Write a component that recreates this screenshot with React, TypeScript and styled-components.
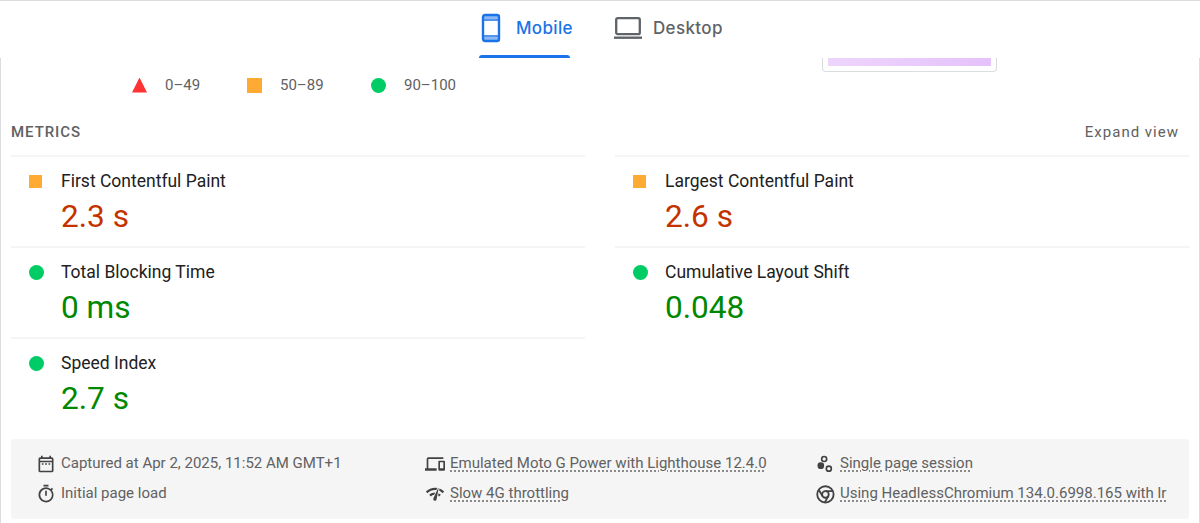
import React from 'react';
import styled, { createGlobalStyle } from 'styled-components';

const GlobalStyle = createGlobalStyle`
  * {
    box-sizing: border-box;
  }

  body {
    margin: 0;
    background: #fff;
    font-family: Roboto, "Liberation Sans", sans-serif;
    overflow: hidden;
  }
`;

type Score = 'pass' | 'average' | 'fail';

const Page = styled.div`
  height: 523px;
  overflow: hidden;
  display: flex;
  flex-direction: column;
`;

const TabBar = styled.nav`
  height: 58px;
  flex: none;
  display: flex;
  justify-content: center;
  gap: 41px;
  padding-left: 2px;
  border-top: 1px solid #dadce0;
`;

const Tab = styled.button<{ $active?: boolean }>`
  position: relative;
  display: flex;
  align-items: center;
  padding: 0 0 3px;
  border: 0;
  background: none;
  color: ${({ $active }) => ($active ? '#1a73e8' : '#5f6368')};

  &::after {
    content: '';
    display: ${({ $active }) => ($active ? 'block' : 'none')};
    position: absolute;
    left: 0;
    right: 3px;
    bottom: 0;
    height: 3px;
    border-radius: 3px 3px 0 0;
    background: #1a73e8;
  }
`;

const TabLabel = styled.span<{ $width: number }>`
  width: ${({ $width }) => $width}px;
  font: 500 17px/24px Inter, sans-serif;
  letter-spacing: 0.35px;
  text-align: left;
  white-space: nowrap;
`;

const TabIcon = styled.svg<{ $gap: number }>`
  flex: none;
  margin-right: ${({ $gap }) => $gap}px;
`;

const Report = styled.main`
  flex: 1;
  padding: 0 10px;
  border: solid #dadce0;
  border-width: 0 1px;
`;

const Summary = styled.div`
  height: 52px;
  display: flex;
  justify-content: space-between;
`;

const Scale = styled.div`
  display: flex;
  align-items: center;
  height: 54px;
  padding-left: 121px;
`;

const ScaleRange = styled.span<{ $width: number }>`
  width: ${({ $width }) => $width}px;
  display: flex;
  align-items: center;
  gap: 18px;
  color: #616161;
  font-size: 15px;
  line-height: 20px;
  white-space: nowrap;
`;

const Thumbnail = styled.div`
  width: 175px;
  height: 14px;
  margin-right: 192px;
  padding: 0 5px 5px;
  border: 1px solid #dadce0;
  border-top: 0;
  border-radius: 0 0 4px 4px;
`;

const ThumbnailFill = styled.div`
  height: 8px;
  background: linear-gradient(90deg, #edd5fc, #e5c2fb);
`;

const marks: Record<Score, string> = {
  pass: '#0c6',
  average: '#fa3',
  fail: '#f33',
};

const Mark = styled.i<{ $score: Score; $size: number }>`
  flex: none;
  width: ${({ $size }) => $size}px;
  height: ${({ $size }) => $size}px;
  background: ${({ $score }) => marks[$score]};
  border-radius: ${({ $score }) => ($score === 'pass' ? '50%' : '0')};
  clip-path: ${({ $score }) => ($score === 'fail' ? 'polygon(50% 0, 100% 100%, 0 100%)' : 'none')};
`;

const MetricsHeader = styled.div`
  display: flex;
  justify-content: space-between;
  align-items: center;
  height: 45px;
  padding: 0 10px 2px 0;
  color: #616161;
  font-size: 15px;
`;

const MetricsTitle = styled.span`
  font-weight: 500;
  letter-spacing: 0.95px;
`;

const ExpandLabel = styled.label`
  letter-spacing: 1px;
`;

const MetricsGrid = styled.div`
  display: grid;
  grid-template-columns: 574px 575px;
  column-gap: 30px;
  grid-auto-rows: 91px;
`;

const Metric = styled.div`
  display: grid;
  grid-template-columns: 32px 1fr;
  align-content: start;
  align-items: center;
  padding: 13px 0 0 18px;
  border-top: 2px solid #f5f5f5;
`;

const MetricTitle = styled.span`
  color: #212121;
  font-size: 17.5px;
  line-height: 22px;
`;

const MetricValue = styled.div<{ $score: Score }>`
  grid-column: 2;
  color: ${({ $score }) => ($score === 'pass' ? '#080' : '#c33300')};
  font-size: 31.6px;
  line-height: 50px;
`;

const MetaBlock = styled.div`
  display: grid;
  grid-template-columns: 389px 390px 1fr;
  grid-auto-rows: 30px;
  height: 80px;
  margin-top: 11px;
  padding: 10px 0 0 25px;
  background: #f5f5f5;
  border-radius: 4px;
`;

const MetaItem = styled.div`
  display: flex;
  align-items: center;
  gap: 5px;
  color: #616161;
  font-size: 15px;
  white-space: nowrap;
`;

const MetaText = styled.span<{ $link?: boolean }>`
  padding-bottom: 2px;
  text-decoration: ${({ $link }) => ($link ? 'underline dotted 1.5px' : 'none')};
  text-decoration-color: #8a8a8a;
  text-underline-offset: 1.5px;
`;

const MetaIcon = styled.svg`
  flex: none;
  width: 20px;
  height: 20px;
  fill: #424242;
`;

const metrics: { title: string; value: string; score: Score }[] = [
  { title: 'First Contentful Paint', value: '2.3 s', score: 'average' },
  { title: 'Largest Contentful Paint', value: '2.6 s', score: 'average' },
  { title: 'Total Blocking Time', value: '0 ms', score: 'pass' },
  { title: 'Cumulative Layout Shift', value: '0.048', score: 'pass' },
  { title: 'Speed Index', value: '2.7 s', score: 'pass' },
];

const icons = {
  date: <path d="M7 11h2v2H7v-2zm14-5v14a2 2 0 0 1-2 2H5a2 2 0 0 1-2-2V6c0-1.1.9-2 2-2h1V2h2v2h8V2h2v2h1a2 2 0 0 1 2 2zM5 8h14V6H5v2zm14 12V10H5v10h14zm-4-7h2v-2h-2v2zm-4 0h2v-2h-2v2z" />,
  devices: <path d="M4 6h18V4H4a2 2 0 0 0-2 2v11H0v3h14v-3H4V6zm19 2h-6a1 1 0 0 0-1 1v10c0 .6.5 1 1 1h6c.6 0 1-.5 1-1V9c0-.6-.5-1-1-1zm-1 9h-4v-7h4v7z" />,
  session: (
    <>
      <circle cx="7" cy="14" r="4" />
      <path d="M11 10a4 4 0 1 1 0-8 4 4 0 0 1 0 8zm0-6a2 2 0 1 0 0 4 2 2 0 0 0 0-4zm5.6 17.6a4 4 0 1 1 0-8 4 4 0 0 1 0 8zm0-6a2 2 0 1 0 0 4 2 2 0 0 0 0-4z" />
    </>
  ),
  stopwatch: <path d="M15 1H9v2h6V1zm-4 13h2V8h-2v6zm8.1-6.6L20.5 6l-1.4-1.4L17.7 6A9 9 0 0 0 3 13a9 9 0 1 0 16-5.6zm-7 12.6a7 7 0 1 1 0-14 7 7 0 0 1 0 14z" />,
  network: <path d="M15.9 5c-.2 0-.3 0-.4.2v.2L10.1 17a2 2 0 0 0-.2 1 2 2 0 0 0 4 .4l2.4-12.9c0-.3-.2-.5-.5-.5zM1 9l2 2c2.9-2.9 6.8-4 10.5-3.6l1.2-2.7C10 3.8 4.7 5.3 1 9zm20 2 2-2a15.4 15.4 0 0 0-5.6-3.6L17 8.2c1.5.7 2.9 1.6 4.1 2.8zm-4 4 2-2a9.9 9.9 0 0 0-2.7-1.9l-.5 3 1.2.9zM5 13l2 2a7.1 7.1 0 0 1 4-2l1.3-2.9C9.7 10.1 7 11 5 13z" />,
  chrome: (
    <g fill="none" stroke="#424242" strokeWidth="2.2">
      <circle cx="12.5" cy="12.5" r="9.8" />
      <circle cx="12.5" cy="12.5" r="4" />
      <path d="M12.5 8.5h9M9 14.5 4.3 6.7M16 14.5l-4.4 7.8" />
    </g>
  ),
};

const meta: { icon: keyof typeof icons; text: string; link?: boolean }[] = [
  { icon: 'date', text: 'Captured at Apr 2, 2025, 11:52 AM GMT+1' },
  { icon: 'devices', text: 'Emulated Moto G Power with Lighthouse 12.4.0', link: true },
  { icon: 'session', text: 'Single page session', link: true },
  { icon: 'stopwatch', text: 'Initial page load' },
  { icon: 'network', text: 'Slow 4G throttling', link: true },
  { icon: 'chrome', text: 'Using HeadlessChromium 134.0.6998.165 with lr', link: true },
];

const App: React.FC = () => {
  return (
    <Page>
      <GlobalStyle />
      <TabBar>
        <Tab $active>
          <TabIcon $gap={12} width="25" height="30" viewBox="0 0 25 30">
            <rect x="4" y="2" width="16" height="26" rx="2" fill="#fff" stroke="currentColor" strokeWidth="2.4" />
            <path d="M4 4.5h16M4 25.5h16" stroke="currentColor" strokeWidth="3" opacity=".5" />
            <path d="M4 7h16M4 23h16" stroke="currentColor" strokeWidth="1.5" />
          </TabIcon>
          <TabLabel $width={57}>Mobile</TabLabel>
        </Tab>
        <Tab>
          <TabIcon $gap={11} width="28" height="24" viewBox="0 0 28 24">
            <rect x="2.2" y="2.2" width="23.6" height="16" rx="1.5" fill="none" stroke="currentColor" strokeWidth="2.3" />
            <path d="M0 21.7h28" stroke="currentColor" strokeWidth="2.4" />
          </TabIcon>
          <TabLabel $width={70}>Desktop</TabLabel>
        </Tab>
      </TabBar>

      <Report>
        <Summary>
          <Scale>
            <ScaleRange $width={115}><Mark $score="fail" $size={15} />0–49</ScaleRange>
            <ScaleRange $width={124}><Mark $score="average" $size={15} />50–89</ScaleRange>
            <ScaleRange $width={90}><Mark $score="pass" $size={15} />90–100</ScaleRange>
          </Scale>
          <Thumbnail>
            <ThumbnailFill />
          </Thumbnail>
        </Summary>

        <MetricsHeader>
          <MetricsTitle>METRICS</MetricsTitle>
          <ExpandLabel>Expand view</ExpandLabel>
        </MetricsHeader>

        <MetricsGrid>
          {metrics.map(({ title, value, score }) => (
            <Metric key={title}>
              <Mark $score={score} $size={score === 'pass' ? 15 : 13} />
              <MetricTitle>{title}</MetricTitle>
              <MetricValue $score={score}>{value}</MetricValue>
            </Metric>
          ))}
        </MetricsGrid>

        <MetaBlock>
          {meta.map(({ icon, text, link }) => (
            <MetaItem key={icon}>
              <MetaIcon viewBox="0 0 24 24">{icons[icon]}</MetaIcon>
              <MetaText $link={link}>{text}</MetaText>
            </MetaItem>
          ))}
        </MetaBlock>
      </Report>
    </Page>
  );
};

export default App;
